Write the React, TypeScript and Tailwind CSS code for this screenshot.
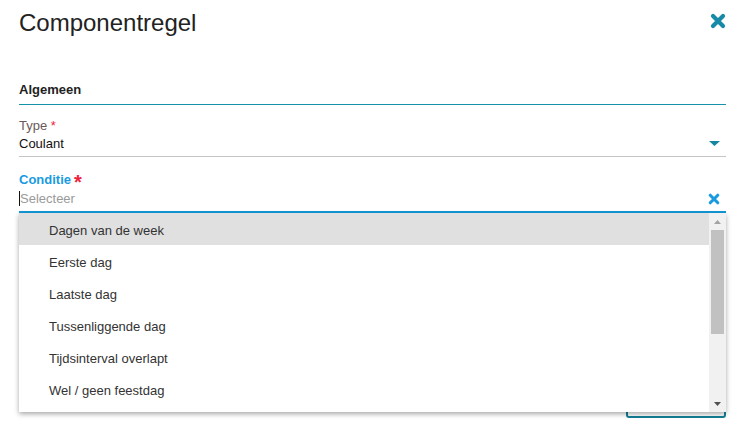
import React from "react";

const items = [
  "Dagen van de week",
  "Eerste dag",
  "Laatste dag",
  "Tussenliggende dag",
  "Tijdsinterval overlapt",
  "Wel / geen feestdag",
];

const CloseIcon = ({ className }: { className?: string }) => (
  <svg viewBox="0 0 16 16" className={className} aria-hidden="true">
    <path
      d="M3 3 L13 13 M13 3 L3 13"
      stroke="currentColor"
      strokeWidth="4.2"
      strokeLinecap="round"
      fill="none"
    />
  </svg>
);

const App = () => {
  return (
    <div
      className="w-[750px] h-[433px] overflow-hidden bg-white px-[19px] pr-[24px] pt-[9px]"
      style={{ fontFamily: '"Liberation Sans", Arial, sans-serif' }}
    >
      {/* header */}
      <div className="flex items-start justify-between">
        <h1 className="text-[24px] leading-[28px] text-[#222]">Componentregel</h1>
        <button type="button" className="mt-[4px] text-[#168aa6]">
          <CloseIcon className="w-4 h-4" />
        </button>
      </div>

      {/* section */}
      <div className="mt-[45px] border-b border-b-[#1592a9] pb-[7px]">
        <h2 className="text-[13px] leading-[15px] font-bold text-[#222]">Algemeen</h2>
      </div>

      {/* Type */}
      <div className="mt-[13px]">
        <label className="block text-[13px] leading-[15px] text-[#6b5858]">
          Type <span className="text-[#f0203c]">*</span>
        </label>
        <div className="flex items-center justify-between border-b border-b-[#c4c4c4] pt-[3px] pb-[5px]">
          <span className="text-[13px] leading-[15px] text-[#111]">Coulant</span>
          <svg viewBox="0 0 11 5" className="w-[11px] h-[5px] mr-[6px] text-[#14879f]">
            <path d="M0 0 L11 0 L5.5 5 Z" fill="currentColor" />
          </svg>
        </div>
      </div>

      {/* Conditie */}
      <div className="relative mt-[15px]">
        <label className="flex items-end gap-[3px] text-[13px] leading-[15px] font-bold text-[#1a9be0]">
          Conditie
          <span className="text-[20px] leading-[15px] font-bold text-[#f0203c] translate-y-[3px]">*</span>
        </label>
        <div className="flex items-center justify-between border-b-2 border-b-[#1399d8] pt-[4px] pb-[5px]">
          <span className="flex items-center text-[13px] leading-[15px] text-[#9a9a9a]">
            <span className="w-px h-[15px] bg-[#111]" />
            Selecteer
          </span>
          <button type="button" className="mr-[6px] text-[#1a9be0]">
            <CloseIcon className="w-3 h-3" />
          </button>
        </div>

        {/* dropdown list */}
        <div className="absolute left-0 right-0 top-full z-10 flex h-[199px] bg-white shadow-[0_2px_5px_rgba(0,0,0,0.35)]">
          <ul className="flex-1 overflow-hidden">
            {items.map((item, i) => (
              <li
                key={item}
                className={`flex h-[32px] items-center pl-[30px] pt-[3px] text-[13px] text-[#333] ${
                  i === 0 ? "bg-[#e0e0e0]" : ""
                }`}
              >
                {item}
              </li>
            ))}
          </ul>
          <div className="flex w-[17px] flex-col items-center bg-[#f1f1f1]">
            <div className="flex h-[17px] items-center justify-center">
              <svg viewBox="0 0 7 4" className="w-[7px] h-[4px]">
                <path d="M0 4 L7 4 L3.5 0 Z" fill="#a3a3a3" />
              </svg>
            </div>
            <div className="h-[104px] w-[13px] bg-[#c1c1c1]" />
            <div className="flex-1" />
            <div className="flex h-[17px] items-center justify-center">
              <svg viewBox="0 0 7 4" className="w-[7px] h-[4px]">
                <path d="M0 0 L7 0 L3.5 4 Z" fill="#505050" />
              </svg>
            </div>
          </div>
        </div>
      </div>

      {/* footer button (mostly hidden behind the list) */}
      <div className="mt-[173px] flex justify-end">
        <button
          type="button"
          className="h-[32px] w-[100px] rounded-[3px] border-2 border-[#137f95] bg-white text-[13px] text-[#137f95]"
        >
          Opslaan
        </button>
      </div>
    </div>
  );
};

export default App;
